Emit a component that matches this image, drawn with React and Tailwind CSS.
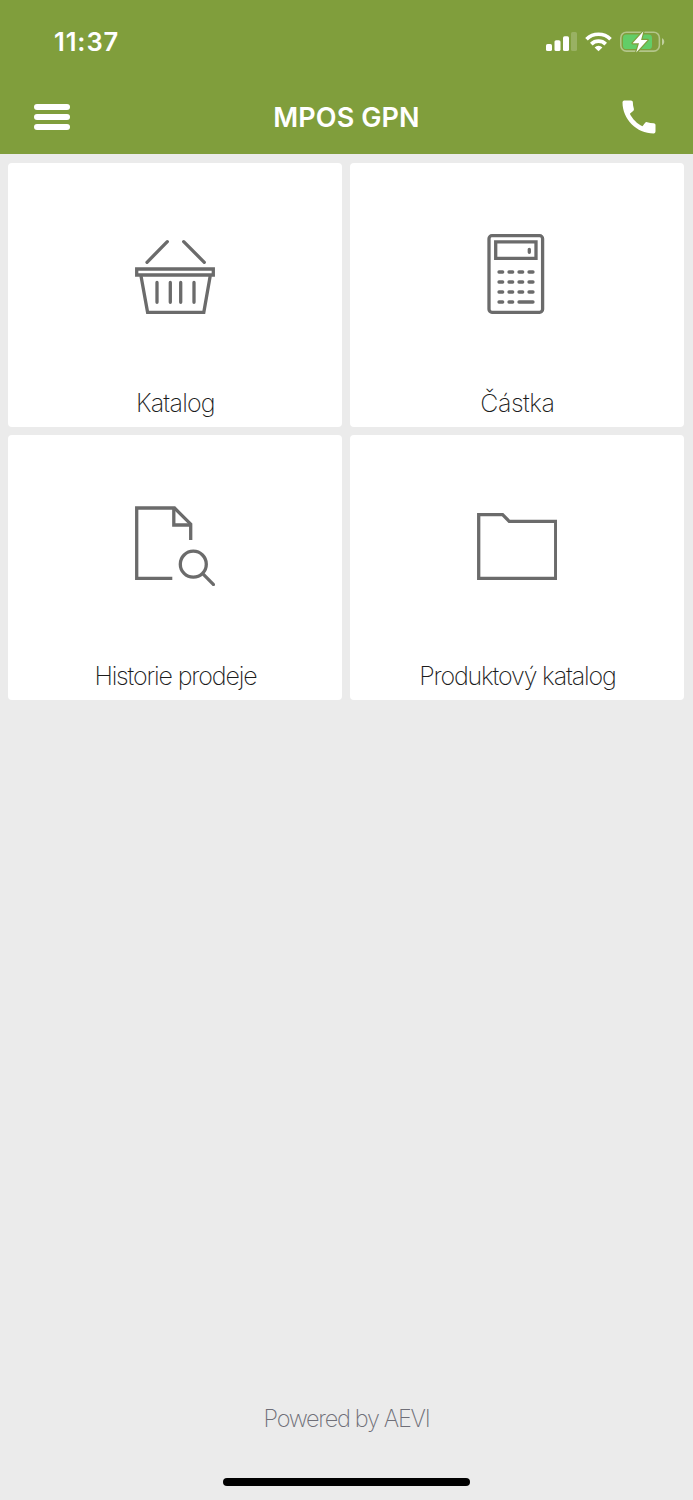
const BasketIcon = () => (
  <svg className="h-20 w-20" viewBox="0 0 80 80" fill="none" stroke="#6b6b6b" strokeWidth="3.3">
    <path d="M12 28.3 32.3 7.7M48.7 7.7 69.3 28.3" strokeLinecap="round" />
    <path d="M1.7 35H78.3V41H1.7Z" />
    <path d="M6 42 12.6 78.4H68.8L75.2 42" />
    <path d="M22 48.5V68.3M35.3 48.5V68.3M45.7 48.5V68.3M59 48.5V68.3" strokeLinecap="round" />
  </svg>
);

const CalculatorIcon = () => (
  <svg className="h-20 w-20" viewBox="0 0 80 80" fill="none" stroke="#6b6b6b" strokeWidth="3.3">
    <rect x="12" y="1.7" width="53.6" height="76.6" rx="3" />
    <path d="M18.7 7.9H59V24.3H18.7Z" />
    <path
      d="M52.3 15.3V18.3M22 38H25.7M32 38H35.7M42 38H45.7M52 38H56M22 48H25.7M32 48H35.7M42 48H45.7M52 48H56M22 58H25.7M32 58H35.7M42 58H45.7M52 58H56M22 68H25.7M32 68H35.7M42 68H56"
      strokeLinecap="round"
    />
  </svg>
);

const HistoryIcon = () => (
  <svg className="h-20 w-20" viewBox="0 0 80 80" fill="none" stroke="#6b6b6b" strokeWidth="3.3">
    <path d="M37.3 72.3H1.7V2H39.5L55.7 18.2V34" />
    <path d="M38.8 2V19H55.7" />
    <circle cx="58.3" cy="58.2" r="13" />
    <path d="M67.7 67.7 79.6 79.6" />
  </svg>
);

const FolderIcon = () => (
  <svg className="h-20 w-20" viewBox="0 0 80 80" fill="none" stroke="#6b6b6b" strokeWidth="3.3">
    <path d="M1.7 8.7H25.6L32.2 15.3H78.7V72.3H1.7Z" />
  </svg>
);

const tiles = [
  { label: "Katalog", Icon: BasketIcon, text: "tracking-[-0.8px]" },
  { label: "Částka", Icon: CalculatorIcon, text: "tracking-[-0.5px]" },
  { label: "Historie prodeje", Icon: HistoryIcon, text: "tracking-[-1.15px]" },
  { label: "Produktový katalog", Icon: FolderIcon, text: "tracking-[-1.15px]" },
];

function StatusBar() {
  return (
    <div className="flex h-[84px] items-center justify-between pr-7 pl-[54px]">
      <span className="text-[25.5px] leading-8 font-semibold tracking-[0.9px]">11:37</span>
      <div className="flex items-center">
        <svg className="h-6 w-[31px]" viewBox="0 0 31 24" fill="#fff">
          <rect x="0" y="14" width="6" height="7" rx="1.6" />
          <rect x="8.5" y="10.2" width="6" height="10.8" rx="1.6" />
          <rect x="17" y="6.2" width="6" height="14.8" rx="1.6" />
          <rect x="25" y="2" width="6" height="19" rx="1.6" opacity=".2" />
        </svg>
        <svg className="ml-2 h-6 w-[27px]" viewBox="0 0 27 24" fill="none" stroke="#fff" strokeWidth="3.7">
          <path d="M1.5 9.2A17 17 0 0 1 25.5 9.2" />
          <path d="M6.3 14.1A10.3 10.3 0 0 1 20.7 14.1" />
          <path d="M13.5 21.3 9.6 17.4A5.7 5.7 0 0 1 17.4 17.4Z" fill="#fff" stroke="none" />
        </svg>
        <svg className="ml-2 h-6 w-[45px]" viewBox="0 0 45 24">
          <rect x=".8" y="2.3" width="38.6" height="18.8" rx="5.6" fill="none" stroke="#fff" strokeOpacity=".4" strokeWidth="1.6" />
          <path d="M42 8.2C45 9.4 45 14 42 15.2Z" fill="#fff" fillOpacity=".5" />
          <rect x="3" y="4.5" width="29" height="14.6" rx="3.4" fill="#63cd67" />
          <path
            d="M23.4 1.2 12.6 13.2H19L16.2 22.6 27.6 10H21.1Z"
            fill="#fff"
            stroke="#809e3c"
            strokeWidth="2.4"
            strokeLinejoin="round"
            paintOrder="stroke"
          />
        </svg>
      </div>
    </div>
  );
}

export default function App() {
  return (
    <div className="flex h-[1500px] w-[693px] flex-col bg-[#ebebeb] font-['Inter','Liberation_Sans',sans-serif]">
      <header className="h-[154px] bg-[#809e3c] text-white">
        <StatusBar />
        <div className="grid h-[66px] grid-cols-[1fr_auto_1fr] items-center px-[34px]">
          <button className="flex w-9 flex-col gap-[4.4px]" aria-label="Menu">
            <span className="h-[5.6px] rounded-full bg-white" />
            <span className="h-[5.6px] rounded-full bg-white" />
            <span className="h-[5.6px] rounded-full bg-white" />
          </button>
          <h1 className="pt-0.5 text-[27px] leading-8 font-semibold tracking-[0.1px]">MPOS GPN</h1>
          <button className="-mr-0.5 justify-self-end pb-px" aria-label="Phone">
            <svg className="h-11 w-11" viewBox="0 0 24 24" fill="#fff">
              <path d="M20.01 15.38c-1.23 0-2.42-.2-3.53-.56-.35-.12-.74-.03-1.01.24l-1.57 1.97c-2.83-1.35-5.48-3.9-6.89-6.83l1.95-1.66c.27-.28.35-.67.24-1.02-.37-1.11-.56-2.3-.56-3.53 0-.54-.45-.99-.99-.99H4.19C3.65 3 3 3.24 3 3.99 3 13.28 10.73 21 20.01 21c.71 0 .99-.63.99-1.18v-3.45c0-.54-.45-.99-.99-.99z" />
            </svg>
          </button>
        </div>
      </header>

      <main className="grid grid-cols-2 gap-2 pt-[8.5px] pr-[8.6px] pl-[8.4px]">
        {tiles.map(({ label, Icon, text }) => (
          <div key={label} className="flex h-[264.5px] flex-col items-center justify-between rounded bg-white pt-[71px] pb-2">
            <Icon />
            <span className={`text-[25px] leading-8 font-extralight text-[#1c1c1c] ${text}`}>{label}</span>
          </div>
        ))}
      </main>

      <footer className="mt-auto flex flex-col items-center pb-[14px]">
        <p className="text-[23.5px] leading-8 font-extralight tracking-[-1.3px] text-[#6f6f78]">Powered by AEVI</p>
        <div className="mt-[43px] h-2 w-[247px] rounded-full bg-black" />
      </footer>
    </div>
  );
}
